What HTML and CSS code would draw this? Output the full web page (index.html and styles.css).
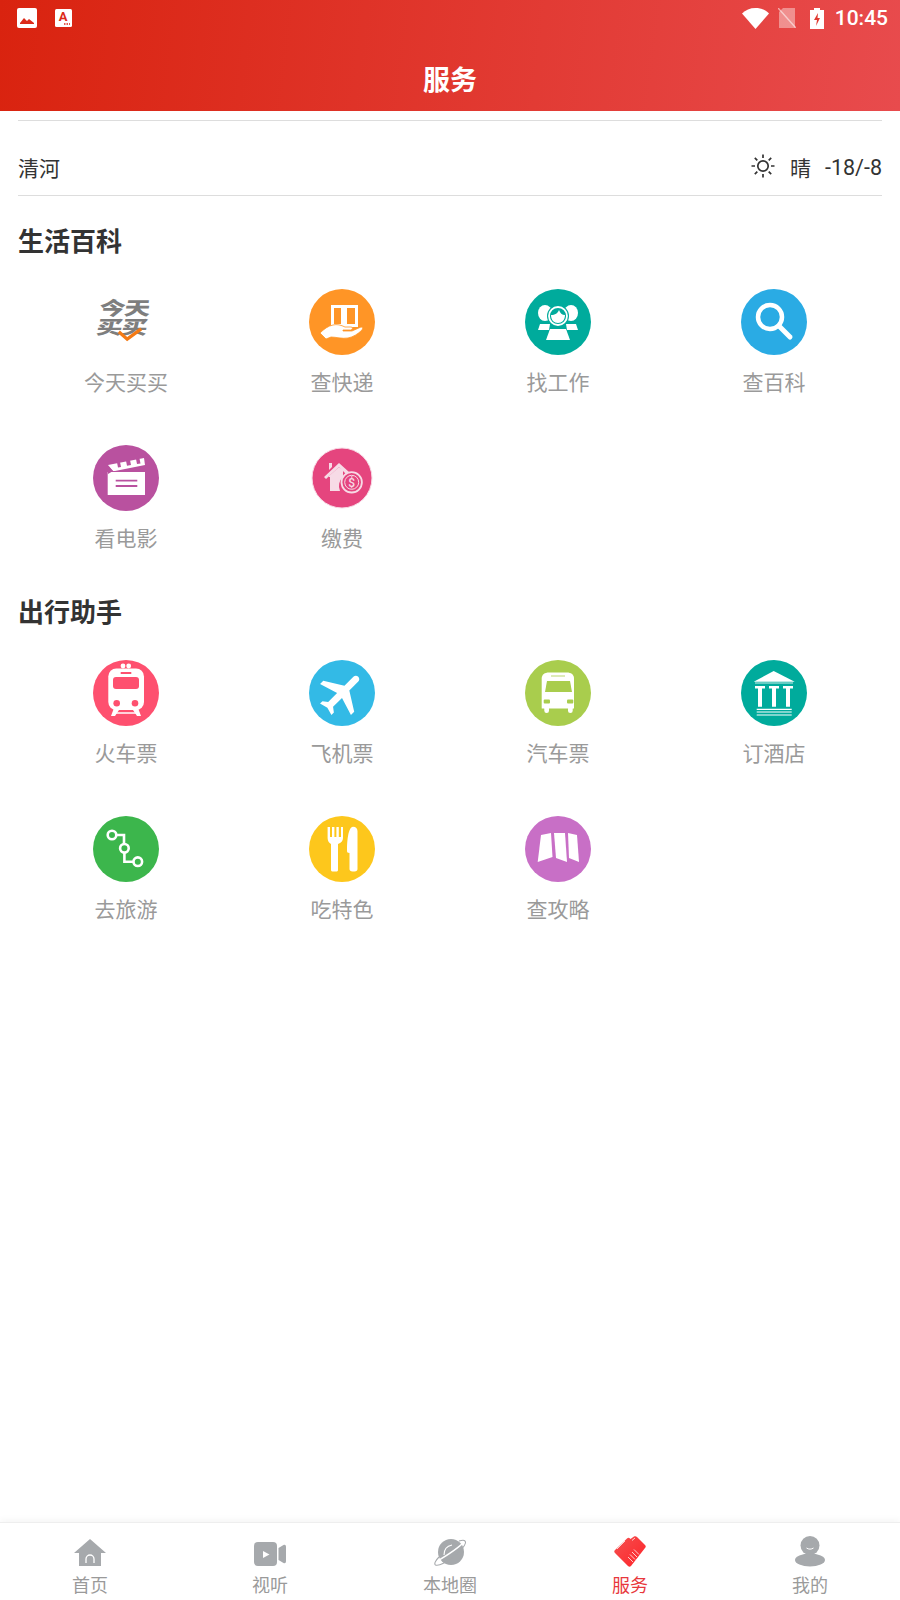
FILE: index.html
```html
<!DOCTYPE html>
<html lang="zh-CN">
<head>
<meta charset="utf-8">
<title>服务</title>
<link rel="stylesheet" href="styles.css">
</head>
<body>
<div class="app">
  <header class="header">
    <div class="status">
      <div class="status-left">
        <svg class="st-img" viewBox="0 0 20 20"><rect width="20" height="20" rx="2" fill="#fff"/><path d="M3 15l4-5 3 3 2-2 5 4v1H3z" fill="#dc2a1a"/></svg>
        <svg class="st-a" viewBox="0 0 17 18"><rect width="17" height="18" rx="1.5" fill="#fff"/><text x="8" y="11.500" text-anchor="middle" class="st-a-letter">A</text><path d="M9 15h1.500M11.500 15h1.500M14 15h1" stroke="#dc2a1a" stroke-width="1.500"/></svg>
      </div>
      <div class="status-right">
        <svg class="st-wifi" viewBox="0 0 27 21"><path d="M0 5.500C3.500 2 8 0 13.500 0S23.500 2 27 5.500L13.500 21z" fill="#fff"/></svg>
        <svg class="st-sim" viewBox="0 0 18 20"><path d="M1 4v16h16V0H5z" fill="#fff" fill-opacity=".4"/><path d="M0 0l18 20" stroke="#fff" stroke-opacity=".55" stroke-width="1.500"/></svg>
        <svg class="st-bat" viewBox="0 0 14 21"><path d="M4 0h6v2h4v19H0V2h4z" fill="#fff"/><path d="M8 5L4 12h3l-1 6 4-8H7.500z" fill="#e03a30"/></svg>
        <span class="time">10:45</span>
      </div>
    </div>
    <h1 class="title">服务</h1>
  </header>

  <main class="main">
    <div class="rule"></div>
    <div class="weather">
      <span>清河</span>
      <div class="weather-right">
        <svg class="sun" viewBox="0 0 24 24" fill="none" stroke="#333" stroke-width="1.700"><circle cx="12" cy="12" r="5.200"/><path d="M12 .5v3.500M12 20v3.500M.5 12H4M20 12h3.500M3.800 3.800l2.500 2.500M17.700 17.700l2.500 2.500M3.800 20.200l2.500-2.500M17.700 6.300l2.500-2.500"/></svg>
        <span class="w-sky">晴</span>
        <span class="w-temp">-18/-8</span>
      </div>
    </div>

    <h2 class="sec-title">生活百科</h2>
    <div class="grid">
      <div class="item">
        <div class="logo-box">
          <div class="logo-text" aria-hidden="true"><span class="logo-line">今天</span><span class="logo-line">买买</span></div>
          <svg class="logo-check" viewBox="0 0 30 16"><path d="M3 5l9 8L27 2" fill="none" stroke="#f47a14" stroke-width="3.500"/></svg>
        </div>
        <span class="label">今天买买</span>
      </div>
      <div class="item">
        <svg class="ico" viewBox="0 0 66 66"><circle cx="33" cy="33" r="33" fill="#ff9526"/><path d="M22 16h27v22H22z" fill="#fff"/><path d="M25 19h7v16h-7zM38 19h8v16h-8z" fill="#ff9526"/><path d="M11 44c4-4 8-7 13-8 4-1 8 0 12 2h6c2 0 2 2 0 3h-8v1h9l9-4c2 0 2 1 1 3-4 4-9 7-14 8-6 1-12-1-17-1l-5 2z" fill="#fff" stroke="#ff9526" stroke-width=".8"/></svg>
        <span class="label">查快递</span>
      </div>
      <div class="item">
        <svg class="ico" viewBox="0 0 66 66"><circle cx="33" cy="33" r="33" fill="#00ab9c"/><ellipse cx="20" cy="24" rx="7" ry="8" fill="#fff"/><ellipse cx="46" cy="24" rx="7" ry="8" fill="#fff"/><path d="M15 35h10l-1 6H13zM41 35h10l2 6H42z" fill="#fff"/><circle cx="33" cy="27" r="11" fill="#00ab9c"/><circle cx="33" cy="27" r="9" fill="none" stroke="#fff" stroke-width="1.800"/><path d="M26 26c4 0 7-2 8-5 1 3 3 5 6 5 0 5-3 8-7 8s-7-3-7-8z" fill="#fff"/><path d="M25 40h16l4 11H21z" fill="#fff"/></svg>
        <span class="label">找工作</span>
      </div>
      <div class="item">
        <svg class="ico" viewBox="0 0 66 66"><circle cx="33" cy="33" r="33" fill="#2aabe4"/><circle cx="29" cy="28" r="12" fill="none" stroke="#fff" stroke-width="4.500"/><path d="M38 37l11 11" stroke="#fff" stroke-width="5" stroke-linecap="round"/></svg>
        <span class="label">查百科</span>
      </div>
      <div class="item">
        <svg class="ico" viewBox="0 0 66 66"><circle cx="33" cy="33" r="33" fill="#b9519f"/><path d="M14.700 27h37.300v23H14.700z" fill="#fff"/><path d="M15 20l36-7 1 7-30 6h-2l-5-6z" fill="#fff"/><path d="M24 17.500l3-.6 1 5-3 .6zM33 15.800l4-.8 1 5-4 .8zM43 14l3.500-.6 1 5-3.500.6z" fill="#b9519f"/><path d="M15 21l5 5-5 3z" fill="#b9519f"/><path d="M22.700 35.700h21.600M22.700 41h21.600" stroke="#b9519f" stroke-width="1.800"/></svg>
        <span class="label">看电影</span>
      </div>
      <div class="item">
        <svg class="ico" viewBox="0 0 66 66"><circle cx="33" cy="33" r="30" fill="#e5457e" stroke="#f8dbe6" stroke-width="1"/><path d="M15 32l15-14 10 9-3 2-7-7-13 12z" fill="#f7dbe6"/><path d="M18 32h2v-1l10-9 4 3v7a12 12 0 0 0-3 14H21V32z" fill="#f7dbe6"/><path d="M20 18h3v4l-3 3z" fill="#f7dbe6"/><circle cx="42.700" cy="37.300" r="10.200" fill="none" stroke="#f7dbe6" stroke-width="1.800"/><circle cx="42.700" cy="37.300" r="7" fill="none" stroke="#f7dbe6" stroke-width="1"/><text x="42.700" y="41.500" text-anchor="middle" class="dollar">$</text></svg>
        <span class="label">缴费</span>
      </div>
    </div>

    <h2 class="sec-title sec-second">出行助手</h2>
    <div class="grid">
      <div class="item">
        <svg class="ico" viewBox="0 0 66 66"><circle cx="33" cy="33" r="33" fill="#fe506f"/><circle cx="30" cy="6" r="2.400" fill="#fff"/><circle cx="35.700" cy="6" r="2.400" fill="#fff"/><rect x="15.300" y="8.500" width="35.700" height="41.500" rx="8" fill="#fff"/><rect x="27.700" y="12" width="10.600" height="2" fill="#fe506f"/><rect x="20" y="17" width="26" height="12" rx="3" fill="#fe506f"/><circle cx="23.700" cy="43.300" r="3.300" fill="#fe506f"/><circle cx="42" cy="43.300" r="3.300" fill="#fe506f"/><path d="M21 48l-3 8h4l4-6M45 48l3 8h-4l-4-6" fill="#fff"/><path d="M23 53h20" stroke="#fff" stroke-width="1.500"/></svg>
        <span class="label">火车票</span>
      </div>
      <div class="item">
        <svg class="ico" viewBox="0 0 66 66"><circle cx="33" cy="33" r="33" fill="#33bae6"/><g transform="translate(33 33) rotate(45) scale(2.300) translate(-11.500 -12)"><path d="M21 16v-2l-8-5V3.500c0-.83-.67-1.500-1.500-1.500S10 2.670 10 3.500V9l-8 5v2l8-2.500V19l-2 1.500V22l3.500-1 3.500 1v-1.500L13 19v-5.500l8 2.500z" fill="#fff"/></g></svg>
        <span class="label">飞机票</span>
      </div>
      <div class="item">
        <svg class="ico" viewBox="0 0 66 66"><circle cx="33" cy="33" r="33" fill="#a9cd4d"/><path d="M24 12.500h18c4 0 7 2 7 6v30H16.700v-30c0-4 3-6 7.300-6z" fill="#fff"/><path d="M22 21h23l2 11H20z" fill="#a9cd4d"/><path d="M26 16h14" stroke="#a9cd4d" stroke-width=".8"/><rect x="18.700" y="39.500" width="6.300" height="4" rx="1" fill="#a9cd4d"/><rect x="42" y="39.500" width="6.300" height="4" rx="1" fill="#a9cd4d"/><rect x="19.300" y="46" width="4.700" height="7" rx="2.300" fill="#fff"/><rect x="43" y="46" width="4.700" height="7" rx="2.300" fill="#fff"/></svg>
        <span class="label">汽车票</span>
      </div>
      <div class="item">
        <svg class="ico" viewBox="0 0 66 66"><circle cx="33" cy="33" r="33" fill="#00ab9c"/><path d="M32.700 11l21 10.700H12.700z" fill="#fff"/><path d="M14 23h38" stroke="#fff" stroke-width=".8"/><path d="M14 26h10v2.500h-3v18.200h-4V28.500h-3zM28 26h10v2.500h-3v18.200h-4V28.500h-3zM42 26h10v2.500h-3v18.200h-4V28.500h-3z" fill="#fff"/><path d="M15.700 49.300h35M15.700 52h35M15.700 55h35" stroke="#fff" stroke-width="1.200"/></svg>
        <span class="label">订酒店</span>
      </div>
      <div class="item">
        <svg class="ico" viewBox="0 0 66 66"><circle cx="33" cy="33" r="33" fill="#3cb64c"/><g fill="none" stroke="#fff" stroke-width="2.600"><circle cx="19" cy="19" r="4.300"/><circle cx="31.400" cy="32.300" r="4.300"/><circle cx="44.800" cy="45.700" r="4.300"/><path d="M23.300 19H31v9M31.400 36.600v9.100h9.100"/></g></svg>
        <span class="label">去旅游</span>
      </div>
      <div class="item">
        <svg class="ico" viewBox="0 0 66 66"><circle cx="33" cy="33" r="33" fill="#fdc71c"/><path d="M18.600 11h2.400v10h2V11h2.400v10h2V11h2.400v10h2.200V11H34v11c0 3-2 5-5 6v26c0 1-1 1.500-2 1.500h-3c-1 0-2-.5-2-1.500V28c-2-1-3.400-3-3.400-6z" fill="#fff"/><path d="M44 10.700c3 0 4.500 2 4.500 4.500V53c0 1.500-1 2.500-3 2.500h-2c-2 0-3-1-3-2.500V37c-2 0-2.500-1-2.500-2 0-9 1-24 6-24.300z" fill="#fff"/></svg>
        <span class="label">吃特色</span>
      </div>
      <div class="item">
        <svg class="ico" viewBox="0 0 66 66"><circle cx="33" cy="33" r="33" fill="#c86fc6"/><path d="M16 19l10-2 1.500 24-14.800 5z" fill="#fff"/><path d="M29 17l11 0 2 29-11-4z" fill="#fff"/><path d="M43 17l9 2 2 27-10-4z" fill="#fff"/></svg>
        <span class="label">查攻略</span>
      </div>
    </div>
  </main>

  <nav class="tabbar">
    <div class="tab">
      <svg class="tab-ico" viewBox="0 0 32 32"><path d="M16 3L32 17H27V30H5V17H0z" fill="#a6a9ac"/><path d="M12 27v-4a4 4 0 0 1 8 0v4" fill="none" stroke="#fff" stroke-width="1.300"/></svg>
      <span class="tab-label">首页</span>
    </div>
    <div class="tab">
      <svg class="tab-ico" viewBox="0 0 32 32"><rect x="0" y="6" width="23" height="24" rx="4" fill="#a6a9ac"/><path d="M24.500 12l5-3c1.500-.5 2.500 0 2.500 2v14c0 2-1 2.500-2.500 2l-5-3z" fill="#a6a9ac"/><path d="M9 15l6.500 3.500L9 22z" fill="#fff"/></svg>
      <span class="tab-label">视听</span>
    </div>
    <div class="tab">
      <svg class="tab-ico" viewBox="0 0 32 32"><circle cx="17" cy="16" r="13" fill="#a6a9ac"/><path d="M3 25C9 22 23 13 29 7" fill="none" stroke="#fff" stroke-width="1.600"/><path d="M5 21c-4 4-5 7-3.500 8 3 1.500 12-4 18-8.500S32 9 31.500 6C31 3.500 28 4 25 5" fill="none" stroke="#a6a9ac" stroke-width="1.100"/><path d="M10 19c0-5 3-9 8-10" fill="none" stroke="#fff" stroke-width="1.100"/></svg>
      <span class="tab-label">本地圈</span>
    </div>
    <div class="tab tab-active">
      <svg class="tab-ico" viewBox="0 0 32 32"><defs><linearGradient id="heart" x1="0" y1="0" x2="1" y2="1"><stop offset="0" stop-color="#f45050"/><stop offset="1" stop-color="#ff2328"/></linearGradient></defs><path d="M13 2.500c1-1 2-1 3 0l.5.5 3.500-2.500c1-.5 2-.5 3 .5l8 8c1 1 1 2 0 3L17 30c-1 1-2 1-3 0L1 17c-1-1-1-2 0-3z" fill="url(#heart)"/><path d="M14 21l5 5M16 18.500l5 5M18 16l5 5M20 13.500l5 5M3 13l8-8M18 4.500l3-2.500" stroke="#fff" stroke-opacity=".85" stroke-width=".9" fill="none"/></svg>
      <span class="tab-label">服务</span>
    </div>
    <div class="tab">
      <svg class="tab-ico" viewBox="0 0 32 32"><ellipse cx="16" cy="24" rx="15" ry="6.500" fill="#a6a9ac"/><circle cx="16" cy="9.500" r="9.500" fill="#a6a9ac"/><path d="M12.500 12c2 1.500 5 1.500 7 0" fill="none" stroke="#fff" stroke-width="1"/></svg>
      <span class="tab-label">我的</span>
    </div>
  </nav>
</div>
</body>
</html>
```

FILE: styles.css
```css
* { box-sizing: border-box; }
html, body { margin: 0; padding: 0; }
body {
  background: #fff;
  font-family: "Noto Sans CJK SC", "Noto Sans", sans-serif;
  color: #333;
}
.app {
  width: 900px;
  height: 1600px;
  display: flex;
  flex-direction: column;
  overflow: hidden;
}
.header {
  height: 111px;
  background: linear-gradient(97deg, #d9230f 0%, #e84b4d 100%);
  color: #fff;
  flex: none;
}
.status {
  height: 48px;
  padding: 7px 12px 0 17px;
  display: flex;
  justify-content: space-between;
  align-items: flex-start;
}
.status-left, .status-right { display: flex; align-items: center; }
.status-left { gap: 18px; height: 22px; }
.status-right { height: 22px; }
.st-img { width: 20px; height: 20px; display: block; }
.st-a { width: 17px; height: 18px; display: block; }
.st-a-letter {
  font-family: "Roboto", sans-serif;
  font-weight: 700;
  font-size: 13px;
  fill: #dc2a1a;
}
.st-wifi { width: 27px; height: 21px; display: block; }
.st-sim { width: 18px; height: 20px; display: block; margin-left: 9px; }
.st-bat { width: 14px; height: 21px; display: block; margin-left: 14px; }
.time {
  font-family: "Roboto", sans-serif;
  font-weight: 500;
  font-size: 21px;
  line-height: 22px;
  margin-left: 11px;
}
.title {
  margin: 0;
  height: 63px;
  line-height: 61px;
  text-align: center;
  font-size: 27px;
  font-weight: 700;
  color: #fff;
}
.main {
  flex: 1;
  padding: 9px 18px 0;
}
.rule { height: 1px; background: #ddd; }
.weather {
  height: 75px;
  padding-top: 18px;
  display: flex;
  justify-content: space-between;
  align-items: center;
  border-bottom: 1px solid #ddd;
  font-size: 21px;
  color: #333;
}
.weather-right { display: flex; align-items: center; }
.sun { width: 24px; height: 24px; display: block; margin-top: -2px; }
.w-sky { margin-left: 15px; }
.w-temp { margin-left: 14px; font-family: "Roboto", sans-serif; font-size: 21.500px; }
.sec-title {
  margin: 26px 0 31px;
  height: 36px;
  line-height: 36px;
  font-size: 26px;
  font-weight: 700;
  color: #333;
}
.sec-second { margin-top: 39px; }
.grid {
  display: grid;
  grid-template-columns: repeat(4, 1fr);
  row-gap: 47px;
}
.item {
  display: flex;
  flex-direction: column;
  align-items: center;
  height: 109px;
}
.ico { width: 66px; height: 66px; display: block; flex: none; }
.label {
  margin-top: 11px;
  height: 30px;
  line-height: 30px;
  font-size: 21px;
  color: #9a9a9a;
}
.logo-box {
  position: relative;
  width: 66px;
  height: 66px;
  flex: none;
}
.logo-text {
  position: absolute;
  left: 6px;
  top: 8px;
  width: 54px;
  display: flex;
  flex-direction: column;
  align-items: center;
  color: #7e7e7e;
  font-weight: 900;
  font-size: 26px;
  line-height: 27px;
  letter-spacing: -1px;
  transform-origin: top center;
  transform: skewX(-8deg) scaleY(.72);
}
.logo-line { display: block; height: 27px; }
.logo-check {
  position: absolute;
  left: 23px;
  top: 37px;
  width: 28px;
  height: 17px;
}
.dollar {
  font-family: "Roboto", sans-serif;
  font-size: 12px;
  font-weight: 500;
  fill: #f7dbe6;
}
.tabbar {
  flex: none;
  height: 78px;
  display: flex;
  background: #fff;
  border-top: 1px solid #eee;
  box-shadow: 0 -3px 6px rgba(0, 0, 0, .035);
  padding-top: 13px;
}
.tab {
  flex: 1;
  display: flex;
  flex-direction: column;
  align-items: center;
}
.tab-ico { width: 32px; height: 32px; display: block; flex: none; }
.tab-label {
  font-size: 18px;
  line-height: 32px;
  color: #9a9a9a;
}
.tab-active .tab-label { color: #e8383d; }
```
